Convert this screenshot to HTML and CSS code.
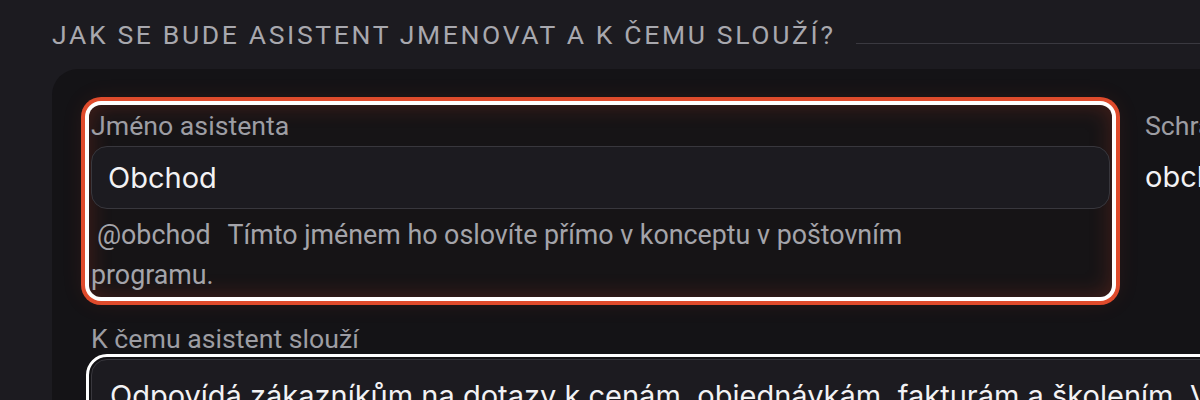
FILE: index.html
```html
<!DOCTYPE html>
<html lang="cs">
<head>
<meta charset="utf-8">
<title>Asistent</title>
<link rel="stylesheet" href="styles.css">
</head>
<body>
<section class="section">
  <div class="section-head">
    <h2 class="section-title">Jak se bude asistent jmenovat a k čemu slouží?</h2>
    <span class="section-rule"></span>
  </div>
  <div class="card">
    <div class="field field-focused">
      <label class="field-label">Jméno asistenta</label>
      <div class="input">Obchod</div>
      <p class="help"><span class="handle">@obchod</span>Tímto jménem ho oslovíte přímo v konceptu v poštovním programu.</p>
    </div>
    <div class="field">
      <label class="field-label">Schránka</label>
      <div class="plain-value">obchod@firma.cz</div>
    </div>
    <div class="field field-wide">
      <label class="field-label">K čemu asistent slouží</label>
      <div class="textarea">Odpovídá zákazníkům na dotazy k cenám, objednávkám, fakturám a školením. V případě nejasností předá dotaz kolegům.</div>
    </div>
  </div>
</section>
</body>
</html>
```
FILE: styles.css
```css
html, body {
  margin: 0;
  padding: 0;
  background: #1c1b20;
  overflow: hidden;
  height: 400px;
}
body {
  font-family: Roboto, "Noto Sans", sans-serif;
}
.section {
  padding: 20px 0 0 52px;
}
.section-head {
  display: flex;
  align-items: center;
}
.section-title {
  margin: 0;
  font-family: Roboto, sans-serif;
  font-weight: 400;
  font-size: 26.5px;
  line-height: 30px;
  letter-spacing: 2.65px;
  text-transform: uppercase;
  color: #a8a8ae;
  white-space: nowrap;
}
.section-rule {
  flex: 1;
  height: 1px;
  background: #3a3940;
  margin: 0 0 -16px 20px;
}
.card {
  margin-top: 19px;
  width: 1500px;
  background: #141316;
  border-radius: 26px;
  padding: 36px 0 40px 37px;
  display: grid;
  grid-template-columns: 1023px 1fr;
  column-gap: 31px;
  row-gap: 21px;
}
.field {
  display: flex;
  flex-direction: column;
  padding: 6px 2px 2px 2px;
  border-radius: 12px;
}
.field-focused {
  background: #161416;
  box-shadow:
    inset 0 0 22px rgba(200, 60, 35, 0.28),
    0 0 0 4px #ffffff,
    0 0 0 8px #df4b2c,
    0 0 22px 6px rgba(200, 60, 35, 0.12);
}
.field-wide {
  grid-column: 1 / -1;
}
.field-label {
  font-size: 26.7px;
  line-height: 30px;
  color: #9d9da3;
  margin-bottom: 5px;
}
.input {
  font-family: Inter, sans-serif;
  font-size: 29px;
  color: #f2f2f4;
  height: 61px;
  line-height: 61px;
  padding: 0 16px;
  background: #1c1b20;
  border: 1px solid #38373d;
  border-radius: 16px;
}
.plain-value {
  font-family: Inter, sans-serif;
  font-size: 29px;
  color: #f2f2f4;
  height: 63px;
  line-height: 61px;
  white-space: nowrap;
}
.help {
  margin: 6px 0 0 0;
  max-width: 870px;
  font-size: 26.8px;
  line-height: 40px;
  color: #a4a4aa;
}
.handle {
  padding-left: 6px;
  margin-right: 17px;
}
.textarea {
  font-family: Inter, sans-serif;
  font-size: 29px;
  color: #f2f2f4;
  line-height: 40px;
  padding: 16px 18px;
  background: #1c1b20;
  border: 1px solid #38373d;
  border-radius: 16px;
  outline: 3px solid #ffffff;
  outline-offset: 2px;
  white-space: nowrap;
  min-height: 120px;
}
```
